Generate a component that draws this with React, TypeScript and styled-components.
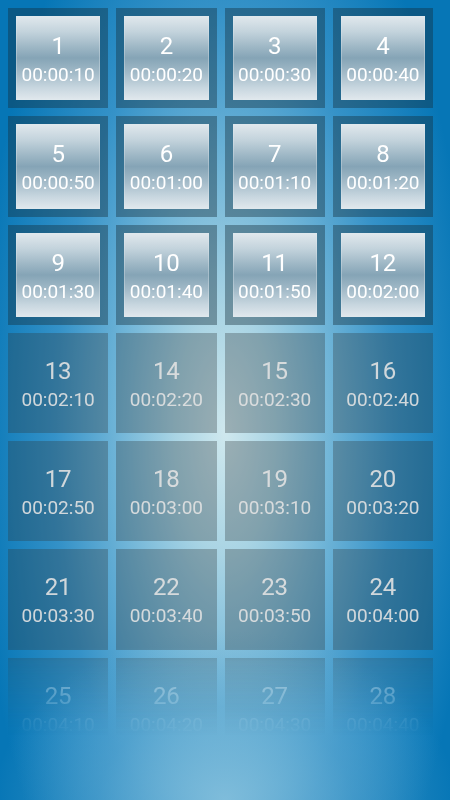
import React from "react";
import styled, { createGlobalStyle } from "styled-components";

const GlobalStyle = createGlobalStyle`
  html, body {
    margin: 0;
    padding: 0;
    height: 100%;
    overflow: hidden;
  }
  body {
    font-family: Roboto, "Noto Sans", sans-serif;
  }
`;

function formatTime(seconds: number) {
  const h = Math.floor(seconds / 3600);
  const m = Math.floor((seconds % 3600) / 60);
  const s = seconds % 60;
  return [h, m, s].map((v) => String(v).padStart(2, "0")).join(":");
}

const slots = Array.from({ length: 28 }, (_, i) => ({
  id: i + 1,
  time: formatTime((i + 1) * 10),
  done: i < 12,
}));

export default function App() {
  return (
    <>
      <GlobalStyle />
      <Screen>
        <Grid>
          {slots.map((slot) => (
            <Tile key={slot.id} $done={slot.done}>
              {slot.done ? (
                <Glass>
                  <Number>{slot.id}</Number>
                  <Time>{slot.time}</Time>
                </Glass>
              ) : (
                <Label>
                  <Number>{slot.id}</Number>
                  <Time>{slot.time}</Time>
                </Label>
              )}
            </Tile>
          ))}
        </Grid>
      </Screen>
    </>
  );
}

const Screen = styled.div`
  width: 450px;
  height: 800px;
  box-sizing: border-box;
  background-color: #0676b6;
  background-image: radial-gradient(
      ellipse 230px 170px at 50% 100%,
      rgba(140, 196, 222, 0.8) 0%,
      rgba(100, 172, 210, 0.45) 55%,
      rgba(6, 118, 182, 0) 100%
    ),
    radial-gradient(
      ellipse 250px 620px at 50% 54%,
      #cfe8ee 0%,
      #a9d4e4 20%,
      #72b6d8 42%,
      #3592c8 68%,
      #0676b6 100%
    );
  overflow: hidden;
`;

const Grid = styled.div`
  display: grid;
  grid-template-columns: repeat(4, 1fr);
  gap: 8px;
  padding: 8px 17px 0 8px;
  -webkit-mask-image: linear-gradient(
    to bottom,
    #000 0px,
    #000 648px,
    rgba(0, 0, 0, 0.6) 662px,
    rgba(0, 0, 0, 0.32) 692px,
    rgba(0, 0, 0, 0.08) 722px,
    transparent 736px
  );
  mask-image: linear-gradient(
    to bottom,
    #000 0px,
    #000 648px,
    rgba(0, 0, 0, 0.6) 662px,
    rgba(0, 0, 0, 0.32) 692px,
    rgba(0, 0, 0, 0.08) 722px,
    transparent 736px
  );
`;

const Tile = styled.div<{ $done: boolean }>`
  aspect-ratio: 1 / 1;
  box-sizing: border-box;
  padding: 8px;
  display: flex;
  background: ${(p) =>
    p.$done ? "rgba(20, 44, 58, 0.4)" : "rgba(48, 56, 58, 0.32)"};
`;

const Glass = styled.div`
  flex: 1;
  display: flex;
  flex-direction: column;
  align-items: center;
  justify-content: center;
  gap: 4px;
  padding-top: 2px;
  box-sizing: border-box;
  border: 1px solid rgba(225, 235, 240, 0.35);
  color: #ffffff;
  background: linear-gradient(
    180deg,
    #dfe7ec 0%,
    #c3d3dc 18%,
    #9fb8c6 36%,
    #85a4b6 50%,
    #a2bac8 68%,
    #c7d6df 86%,
    #dfe7ec 100%
  );
`;

const Label = styled.div`
  flex: 1;
  display: flex;
  flex-direction: column;
  align-items: center;
  justify-content: center;
  gap: 4px;
  padding-top: 2px;
  color: rgba(226, 226, 226, 0.9);
`;

const Number = styled.div`
  font-size: 24px;
  line-height: 28px;
`;

const Time = styled.div`
  font-size: 19px;
  line-height: 22px;
`;
